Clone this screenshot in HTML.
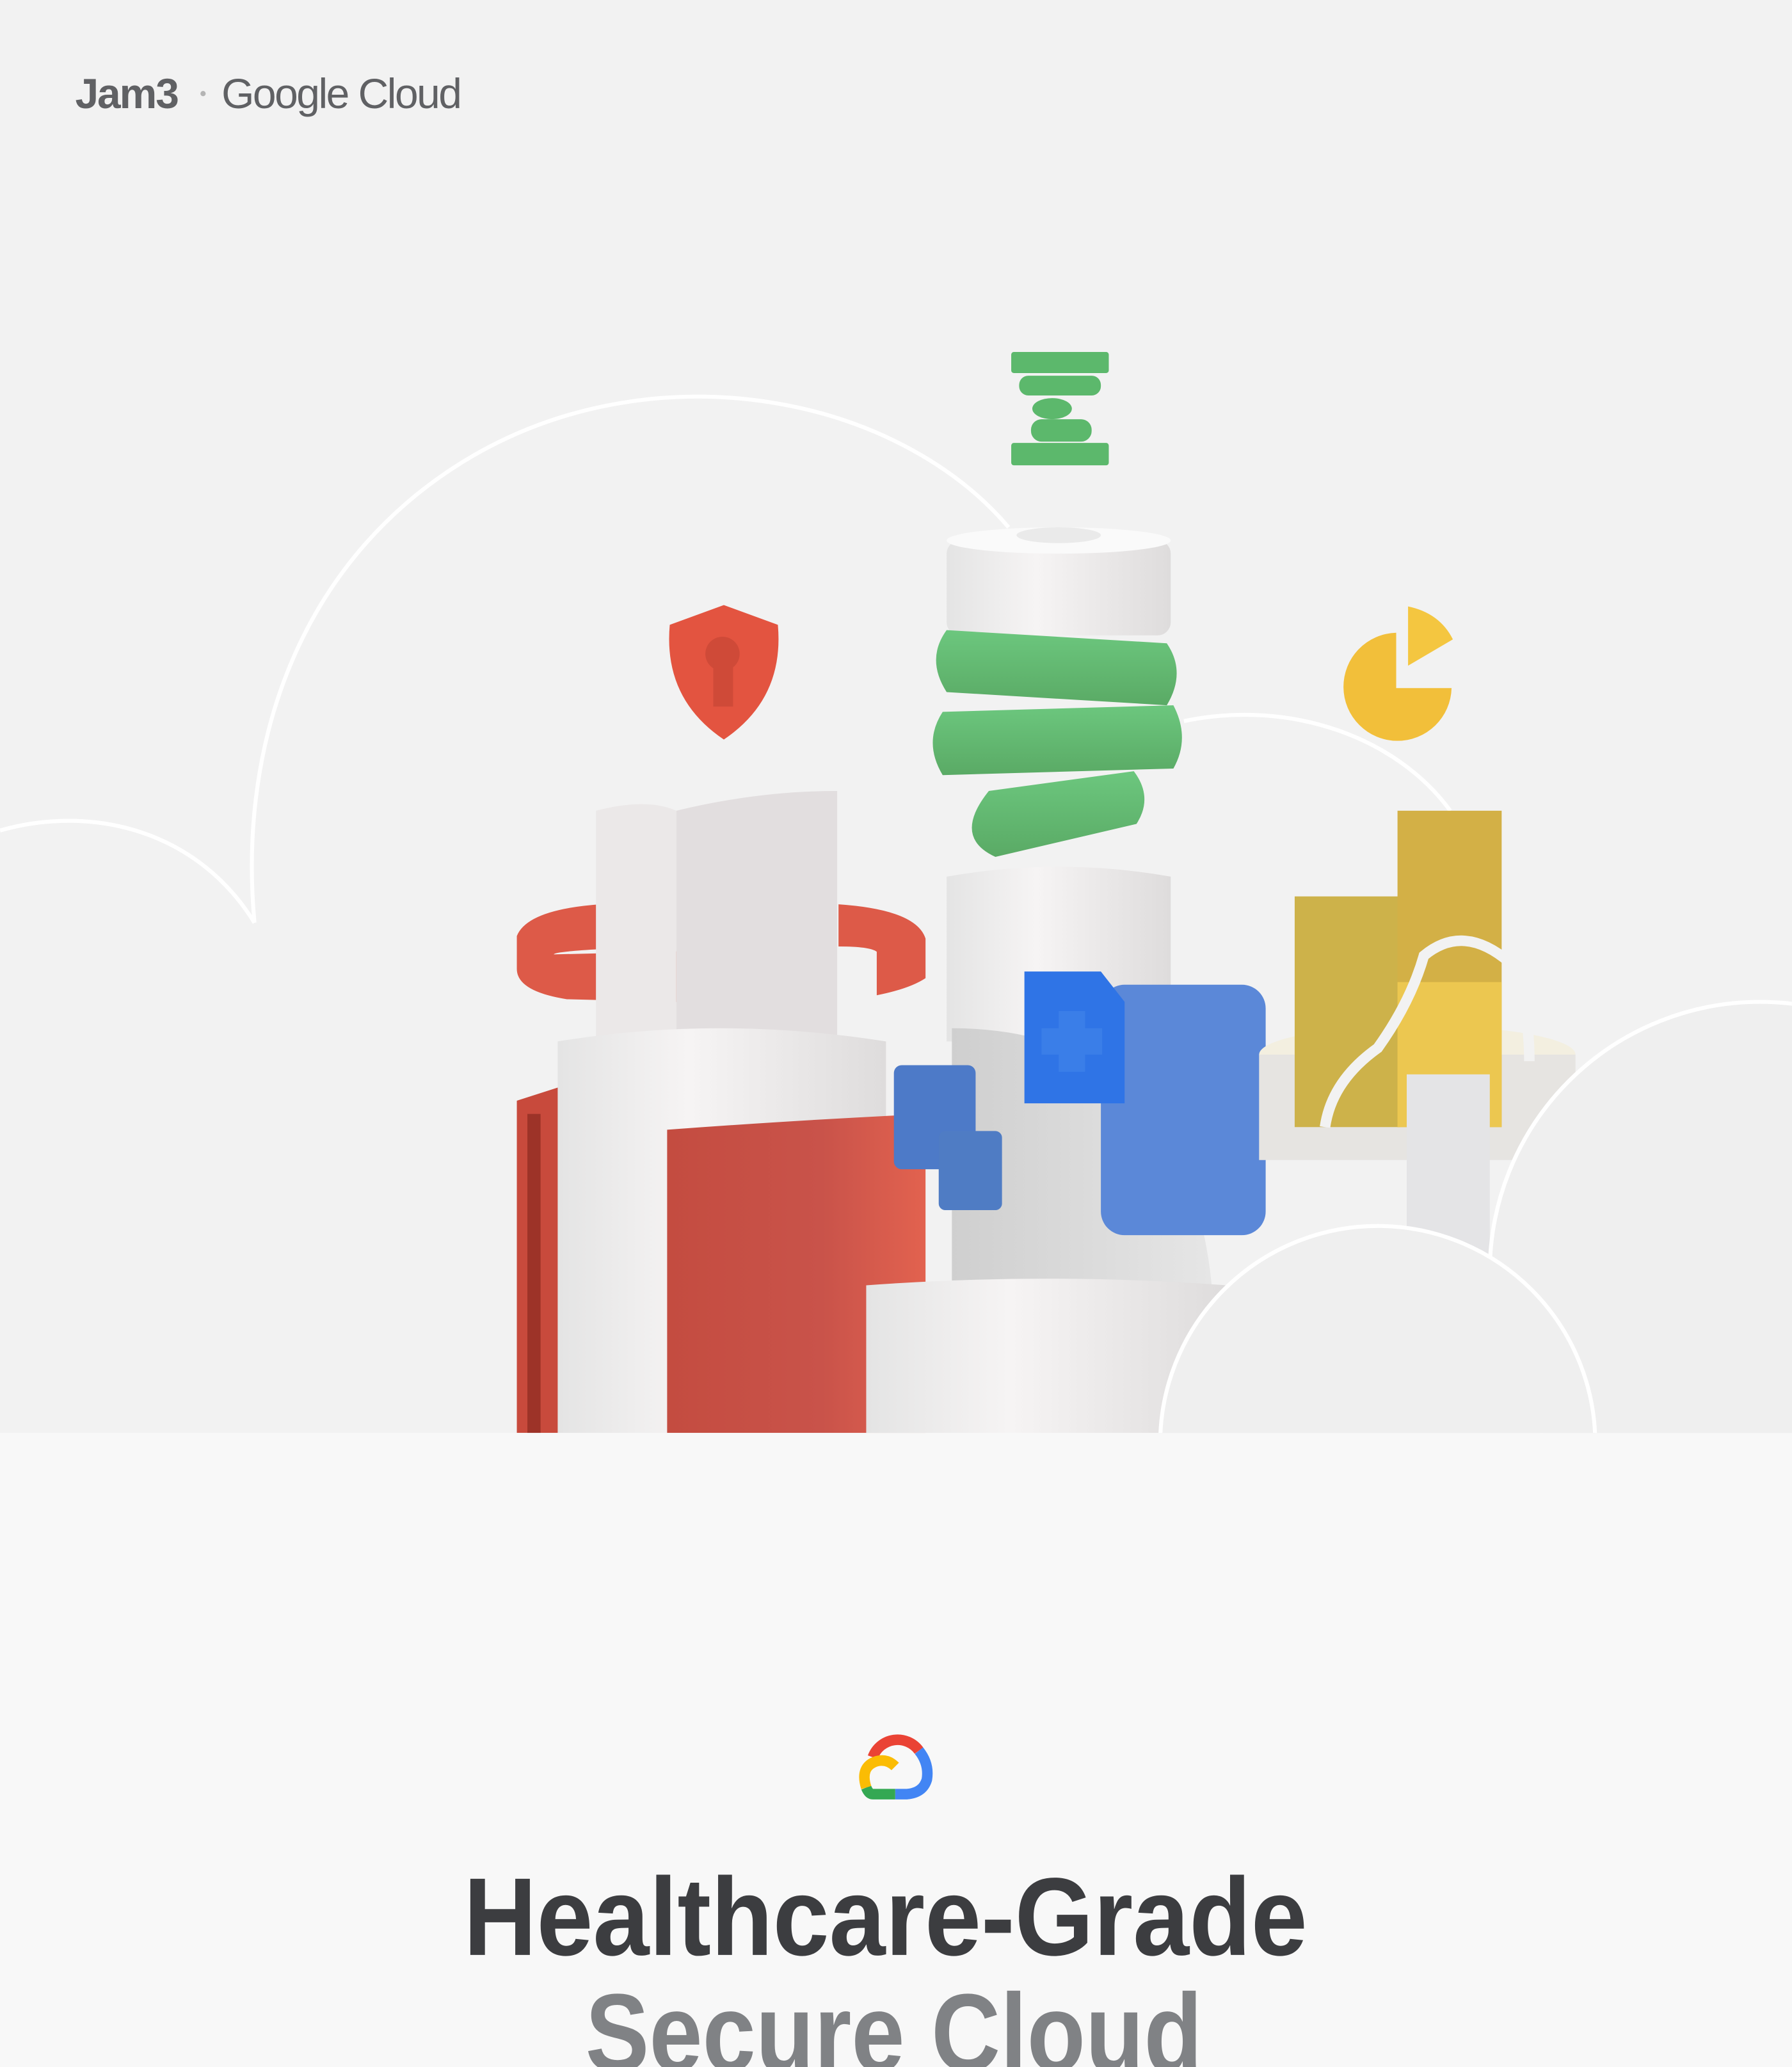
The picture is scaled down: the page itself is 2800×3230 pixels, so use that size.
<!DOCTYPE html>
<html><head><meta charset="utf-8"><style>
html,body{margin:0;padding:0;width:2800px;height:3230px;overflow:hidden;background:#f8f8f8}
svg{display:block}
</style></head><body>
<svg width="2800" height="3230" viewBox="0 0 1359.2 1568" xmlns="http://www.w3.org/2000/svg">
<defs>
<clipPath id="top"><rect width="1359.2" height="1087"/></clipPath>
<linearGradient id="wc" x1="0" x2="1"><stop offset="0" stop-color="#e4e4e4"/><stop offset=".4" stop-color="#f6f4f4"/><stop offset="1" stop-color="#dedcdc"/></linearGradient>
<linearGradient id="rd" x1="0" x2="1"><stop offset="0" stop-color="#c44c40"/><stop offset=".6" stop-color="#c9534a"/><stop offset="1" stop-color="#e2624f"/></linearGradient>
<linearGradient id="gr" x1="0" y1="0" x2="0" y2="1"><stop offset="0" stop-color="#6cc77e"/><stop offset="1" stop-color="#5aaa65"/></linearGradient>
<linearGradient id="gy" x1="0" x2="1"><stop offset="0" stop-color="#cfcfcf"/><stop offset="1" stop-color="#e6e6e6"/></linearGradient>
</defs>
<rect width="1359.2" height="1087" fill="#f2f2f2"/>
<rect y="1087" width="1359.2" height="481" fill="#f8f8f8"/>
<g clip-path="url(#top)">
<path d="M193 700 C180 560 230 420 360 345 C500 265 680 300 765 400" fill="none" stroke="#fff" stroke-width="3"/>
<path d="M0 630 C70 610 150 630 193 700" fill="none" stroke="#fff" stroke-width="3"/>
<path d="M898 547 C980 530 1060 560 1100 615" fill="none" stroke="#fff" stroke-width="3"/>
<g fill="#5cb86c"><rect x="767" y="267" width="74" height="16" rx="2"/><rect x="773" y="285" width="62" height="15" rx="7"/><ellipse cx="798" cy="310" rx="15" ry="8"/><rect x="782" y="318" width="46" height="17" rx="8"/><rect x="767" y="336" width="74" height="17" rx="2"/></g>
<rect x="718" y="410" width="170" height="72" rx="10" fill="url(#wc)"/>
<ellipse cx="803" cy="410" rx="85" ry="10" fill="#fafafa"/>
<ellipse cx="803" cy="406" rx="32" ry="6" fill="#eaeaea"/>
<g fill="url(#gr)">
<path d="M718 478 L885 488 Q900 510 885 535 L718 525 Q702 500 718 478Z"/>
<path d="M715 540 L890 535 Q903 560 890 583 L715 588 Q700 563 715 540Z"/>
<path d="M750 600 L860 585 Q875 605 862 625 L755 650 Q722 635 750 600Z"/>
</g>
<path d="M718 665 Q803 650 888 665 L888 790 L718 790Z" fill="url(#wc)"/>
<path d="M549 459 L590 474 Q595 530 549 561 Q503 530 508 474Z" fill="#e35440"/>
<circle cx="548" cy="496" r="13" fill="#cf4a38"/><rect x="541" y="500" width="15" height="36" fill="#cf4a38"/>
<path d="M392 710 Q400 690 455 686 L455 720 Q420 722 420 724 L586 720 L586 762 L430 758 Q392 752 392 735Z" fill="#dd5a48"/>
<path d="M636 686 Q695 690 702 712 L702 742 Q690 750 665 755 L665 722 Q660 718 636 718Z" fill="#dd5a48"/>
<path d="M452 615 Q490 605 513 615 L513 795 L452 795Z" fill="#ebe8e8"/>
<path d="M513 615 Q575 600 635 600 L635 785 L513 795Z" fill="#e2dedf"/>
<path d="M423 790 Q545 770 672 790 L672 1087 L423 1087Z" fill="url(#wc)"/>
<path d="M392 835 L423 825 L423 1087 L392 1087Z" fill="#c84a3c"/>
<rect x="400" y="845" width="10" height="242" fill="#8a2a20" opacity=".7"/>
<path d="M506 857 Q600 850 702 845 L702 1087 L506 1087Z" fill="url(#rd)"/>
<path d="M722 780 Q820 780 870 840 Q915 900 920 988 L722 988Z" fill="url(#gy)"/>
<rect x="835" y="747" width="125" height="190" rx="18" fill="#5b88d8"/>
<path d="M777 737 L835 737 L853 760 L853 837 L777 837Z" fill="#2f74e6"/>
<path d="M803 767 h20 v13 h13 v20 h-13 v13 h-20 v-13 h-13 v-20 h13z" fill="#3a7ee8"/>
<rect x="678" y="808" width="62" height="79" rx="6" fill="#4d7ac8"/>
<rect x="712" y="858" width="48" height="60" rx="5" fill="#4f7cc4"/>
<path d="M657 975 Q795 965 930 975 L930 1087 L657 1087Z" fill="url(#wc)"/>
<path d="M1059 480 A41 41 0 1 0 1101 522 L1059 522Z" fill="#f2bf3a"/>
<path d="M1068 460 Q1092 465 1102 485 L1068 505Z" fill="#f4c640"/>
<ellipse cx="1075" cy="800" rx="120" ry="22" fill="#f3efe0"/>
<path d="M955 800 L1195 800 L1195 880 L955 880Z" fill="#e6e4e1"/>
<rect x="982" y="680" width="80" height="175" fill="#cdb24a"/>
<rect x="1060" y="615" width="79" height="240" fill="#d3b046"/>
<rect x="1060" y="745" width="79" height="110" fill="#ecc750"/>
<path d="M1005 855 Q1010 820 1045 795 Q1070 760 1080 725 Q1110 700 1145 730 Q1160 760 1160 805" fill="none" stroke="#f2f2f2" stroke-width="8"/>
<rect x="1067" y="815" width="63" height="150" fill="#e4e4e6"/>
<circle cx="1335" cy="965" r="205" fill="#efefef" stroke="#fff" stroke-width="3"/>
<circle cx="1045" cy="1095" r="165" fill="#efefef" stroke="#fff" stroke-width="3"/>
</g>
<text x="57" y="82" font-family="Liberation Sans, sans-serif" font-size="32" font-weight="bold" fill="#606164" letter-spacing="-1">Jam3</text>
<circle cx="154" cy="71" r="2" fill="#b4b4b4"/>
<text x="168" y="82" font-family="Liberation Sans, sans-serif" font-size="32" fill="#606164" letter-spacing="-1.2">Google Cloud</text>
<path d="M662 1333 A20 20 0 0 1 697 1328" fill="none" stroke="#ea4335" stroke-width="8"/>
<path d="M697 1328 Q705 1338 703 1350 Q700 1360 688 1361 L679 1361" fill="none" stroke="#4285f4" stroke-width="8"/>
<path d="M679 1361 L662 1361 Q659 1361 657 1356" fill="none" stroke="#34a853" stroke-width="8"/>
<path d="M657 1356 Q652 1340 665 1336 Q673 1334 679 1340" fill="none" stroke="#fbbc04" stroke-width="8"/>
<text x="671.6" y="1483" text-anchor="middle" font-family="Liberation Sans, sans-serif" font-size="84" font-weight="bold" fill="#3c3d40" textLength="640" lengthAdjust="spacingAndGlyphs">Healthcare-Grade</text>
<text x="678" y="1571" text-anchor="middle" font-family="Liberation Sans, sans-serif" font-size="84" font-weight="bold" fill="#808285" textLength="468" lengthAdjust="spacingAndGlyphs">Secure Cloud</text>
</svg>
</body></html>
